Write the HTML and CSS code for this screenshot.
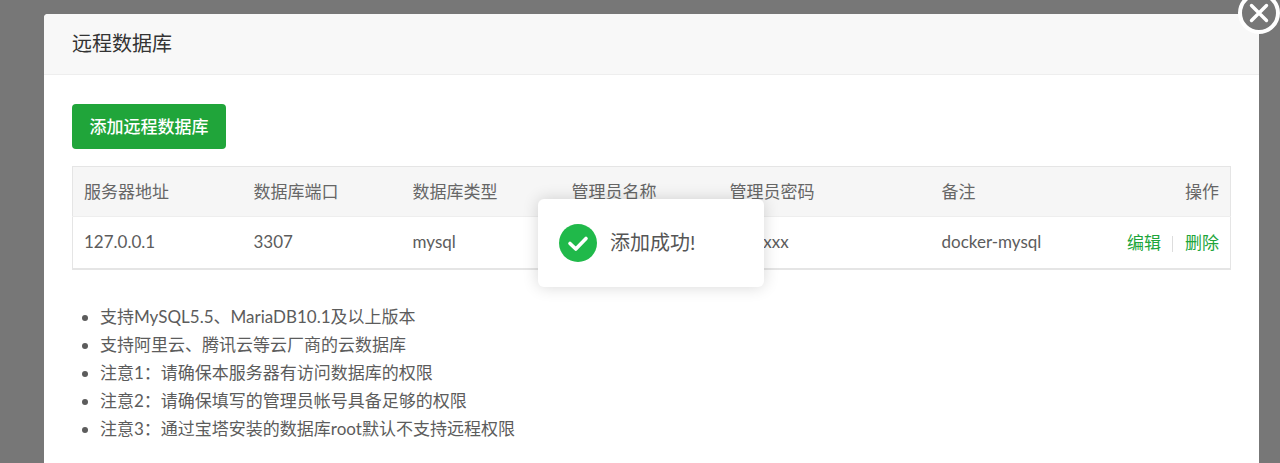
FILE: index.html
```html
<!DOCTYPE html>
<html lang="zh-CN">
<head>
    <meta charset="UTF-8">
    <title>远程数据库</title>
    <link rel="stylesheet" href="styles.css">
</head>
<body>
<div class="modal">
    <div class="modal-title">远程数据库</div>
    <div class="modal-body">
        <button class="btn-add" type="button">添加远程数据库</button>
        <table class="db-table">
            <colgroup>
                <col class="col-host">
                <col class="col-port">
                <col class="col-type">
                <col class="col-user">
                <col class="col-pass">
                <col class="col-note">
                <col>
            </colgroup>
            <thead>
                <tr>
                    <th>服务器地址</th>
                    <th>数据库端口</th>
                    <th>数据库类型</th>
                    <th>管理员名称</th>
                    <th>管理员密码</th>
                    <th>备注</th>
                    <th class="align-right">操作</th>
                </tr>
            </thead>
            <tbody>
                <tr>
                    <td>127.0.0.1</td>
                    <td>3307</td>
                    <td>mysql</td>
                    <td>root</td>
                    <td>xxxxxxx</td>
                    <td>docker-mysql</td>
                    <td class="align-right">
                        <a class="link" href="#">编辑</a><span class="divider"></span><a class="link" href="#">删除</a>
                    </td>
                </tr>
            </tbody>
        </table>
        <ul class="tips">
            <li>支持MySQL5.5、MariaDB10.1及以上版本</li>
            <li>支持阿里云、腾讯云等云厂商的云数据库</li>
            <li>注意1：请确保本服务器有访问数据库的权限</li>
            <li>注意2：请确保填写的管理员帐号具备足够的权限</li>
            <li>注意3：通过宝塔安装的数据库root默认不支持远程权限</li>
        </ul>
    </div>
</div>

<div class="close-btn">
    <svg width="22" height="22" viewBox="0 0 22 22">
        <path d="M3.5 3.5L18.5 18.5M18.5 3.5L3.5 18.5" stroke="#fff" stroke-width="3.4" stroke-linecap="round" fill="none"/>
    </svg>
</div>

<div class="toast">
    <span class="toast-icon">
        <svg width="38" height="38" viewBox="0 0 38 38">
            <circle cx="19" cy="19" r="19" fill="#20b94a"/>
            <path d="M11 19.5L16.8 25L27 14.5" stroke="#fff" stroke-width="3.6" stroke-linecap="round" stroke-linejoin="round" fill="none"/>
        </svg>
    </span>
    <span class="toast-text">添加成功!</span>
</div>
</body>
</html>
```

FILE: styles.css
```css
html, body {
    height: 100%;
}

body {
    margin: 0;
    overflow: hidden;
    background-color: #777;
    font-family: Lato, "Noto Sans CJK SC", sans-serif;
    color: #5c5c5c;
}

.modal {
    margin: 14px 21px 0 44px;
    height: 449px;
    background: white;
    border-radius: 4px 4px 0 0;
}

.modal-title {
    height: 60px;
    line-height: 58px;
    padding-left: 28px;
    font-size: 20px;
    color: #333;
    background-color: #f8f8f8;
    border-bottom: 1px solid #eee;
    border-radius: 4px 4px 0 0;
}

.modal-body {
    padding: 29px 28px 0;
}

.btn-add {
    display: block;
    width: 154px;
    height: 45px;
    padding: 0 0 2px;
    font-family: inherit;
    font-size: 17px;
    font-weight: 500;
    color: white;
    background-color: #20a53a;
    border: none;
    border-radius: 4px;
}

.db-table {
    width: 1159px;
    margin-top: 17px;
    table-layout: fixed;
    border-collapse: collapse;
    border: 1px solid #e5e5e5;
    border-bottom-width: 2px;
    font-size: 17px;
}

.col-host { width: 170px; }
.col-port { width: 159px; }
.col-type { width: 159px; }
.col-user { width: 158px; }
.col-pass { width: 212px; }
.col-note { width: 172px; }

.db-table th {
    height: 47px;
    padding: 0 12px 2px 11px;
    text-align: left;
    font-weight: 400;
    color: #666;
    background-color: #f6f6f6;
    border-bottom: 1px solid #eee;
}

.db-table td {
    height: 49px;
    padding: 0 12px 2px 11px;
    white-space: nowrap;
}

.db-table .align-right {
    padding-right: 11px;
    text-align: right;
}

.link {
    color: #20a53a;
    text-decoration: none;
}

.divider {
    display: inline-block;
    width: 1px;
    height: 16px;
    margin: 0 12px 0 11px;
    vertical-align: -3px;
    background-color: #ddd;
}

.tips {
    margin: 33px 0 0;
    padding-left: 28px;
    font-size: 17px;
    line-height: 28px;
}

.close-btn {
    position: absolute;
    left: 1238px;
    top: -8px;
    width: 34px;
    height: 34px;
    display: flex;
    align-items: center;
    justify-content: center;
    background-color: #777;
    border: 4px solid white;
    border-radius: 50%;
}

.toast {
    position: absolute;
    left: 538px;
    top: 199px;
    width: 226px;
    height: 88px;
    display: flex;
    align-items: center;
    box-sizing: border-box;
    padding-left: 21px;
    background: white;
    border-radius: 6px;
    box-shadow: 0 0 16px rgba(0,0,0,0.16);
}

.toast-icon {
    display: flex;
    margin-right: 13px;
}

.toast-text {
    font-size: 20px;
    line-height: 24px;
    margin-top: -2px;
    color: #555;
}
```
